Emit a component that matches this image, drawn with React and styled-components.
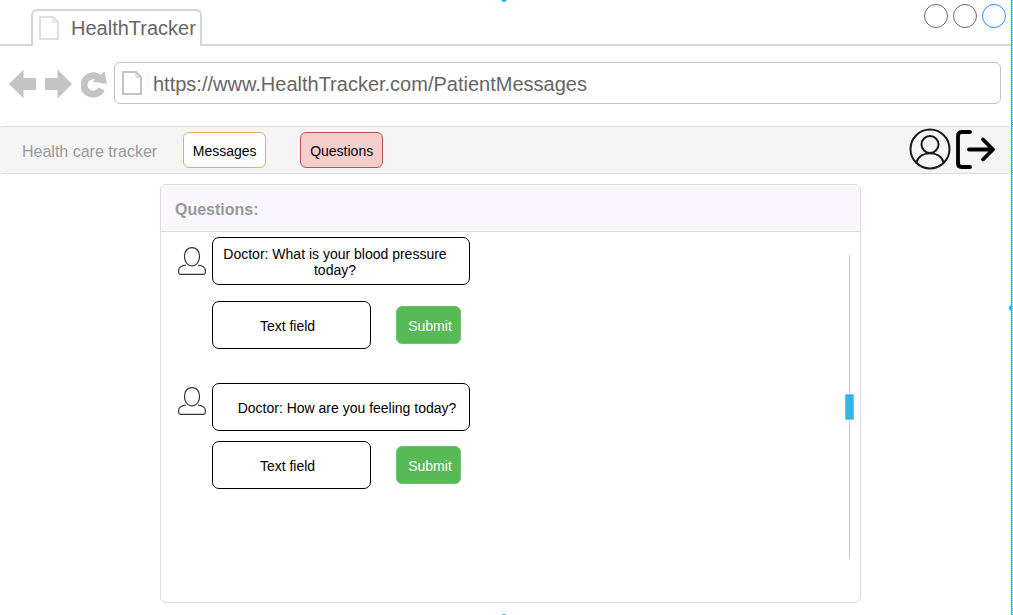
import React from "react";
import styled, { createGlobalStyle } from "styled-components";

const GlobalStyle = createGlobalStyle`
  *, *::before, *::after { box-sizing: border-box; }
  body {
    margin: 0;
    background: #fff;
    color: #000;
    font-family: "Liberation Sans", Arial, sans-serif;
    font-size: 14px;
    line-height: 16px;
  }
  button, input { font: inherit; color: inherit; margin: 0; }
`;

const BrowserWindow = styled.div`
  position: relative;
  display: flex;
  flex-direction: column;
  min-height: 100vh;
  border-right: 1px dotted #29b6f2;
  overflow: hidden;
`;

const Frame = styled.div`
  display: flex;
  flex-direction: column;
  flex: 1;
  border-right: 1px solid #8c8c8c;
`;

const Handle = styled.span`
  position: absolute;
  width: 6px;
  height: 6px;
  border-radius: 50%;
  background: #29b6f2;
  ${(p) => p.$side === "top" && "top: -4px; left: calc(50% - 5px);"}
  ${(p) => p.$side === "bottom" && "bottom: -5px; left: calc(50% - 5px);"}
  ${(p) => p.$side === "right" && "right: -3px; top: calc(50% - 3px);"}
`;

const TabStrip = styled.div`
  display: flex;
  justify-content: space-between;
  align-items: flex-start;
  height: 46px;
  padding: 9px 5px 0 31px;
  box-shadow: inset 0 -2px #d6d6d6;
`;

const Tab = styled.div`
  display: flex;
  align-items: center;
  gap: 12px;
  height: 37px;
  width: 171px;
  padding: 0 6px 2px;
  border: 2px solid #d6d6d6;
  border-bottom: 0;
  border-radius: 6px 6px 0 0;
  background: #fff;
  color: #666;
  font-size: 20px;
  line-height: 24px;
  & > svg { flex: none; }
`;

const WindowControls = styled.div`
  display: flex;
  gap: 5px;
  margin-top: -5px;
`;

const WindowButton = styled.button`
  width: 24px;
  height: 24px;
  padding: 0;
  border: 1px solid ${(p) => (p.$active ? "#1e90ff" : "#6a6a6a")};
  border-radius: 50%;
  background: #fff;
`;

const Toolbar = styled.div`
  display: flex;
  align-items: center;
  gap: 7px;
  height: 80px;
  padding: 0 10px 6px 9px;
`;

const HistoryButtons = styled.div`
  display: flex;
  align-items: center;
  gap: 9px;
  padding-top: 2px;
`;

const IconButton = styled.button`
  display: flex;
  padding: 0;
  border: 0;
  background: none;
  color: #c4c4c4;
`;

const AddressBar = styled.label`
  display: flex;
  align-items: center;
  gap: 11px;
  flex: 1;
  height: 42px;
  padding: 0 8px 0 7px;
  border: 1px solid #c4c4c4;
  border-radius: 6px;
  background: #fff;
`;

const AddressInput = styled.input`
  flex: 1;
  min-width: 0;
  height: 32px;
  padding: 2px 0 0;
  border: 0;
  outline: 0;
  background: none;
  color: #666;
  font-size: 20px;
`;

const NavBar = styled.nav`
  display: flex;
  align-items: center;
  height: 48px;
  padding: 0 15px 0 22px;
  border: 1px solid #ddd;
  border-width: 1px 0;
  border-radius: 3px;
  background: #f5f5f5;
`;

const Brand = styled.span`
  margin-right: 26px;
  padding-top: 4px;
  color: #999;
  font-size: 16px;
  line-height: 20px;
`;

const NavButton = styled.button`
  width: 83px;
  height: 36px;
  margin-right: 34px;
  padding: 2px 0 0;
  border: 1px solid ${(p) => (p.$active ? "#b85450" : "#d6b656")};
  border-radius: 6px;
  background: ${(p) => (p.$active ? "#f8cecc" : "#fff")};
`;

const NavActions = styled.div`
  display: flex;
  gap: 4px;
  margin-left: auto;
  padding-bottom: 2px;
`;

const Card = styled.main`
  display: flex;
  flex-direction: column;
  flex: 1;
  margin: 10px 150px 12px 160px;
  border: 1px solid #ddd;
  border-radius: 6px;
  background: #fff;
`;

const CardHeader = styled.h1`
  margin: 0;
  height: 47px;
  padding: 15px 14px;
  border-bottom: 1px solid #ddd;
  border-radius: 6px 6px 0 0;
  background: #faf8fe;
  color: #999;
  font-size: 16px;
  line-height: 20px;
`;

const CardBody = styled.div`
  display: flex;
  flex: 1;
  justify-content: space-between;
  padding: 5px 6px 0 17px;
`;

const QuestionList = styled.div`
  display: flex;
  flex-direction: column;
  gap: 34px;
`;

const QuestionForm = styled.form`
  display: flex;
  flex-direction: column;
  gap: ${(p) => (p.$compact ? 10 : 16)}px;
`;

const QuestionRow = styled.div`
  display: flex;
  align-items: ${(p) => (p.$compact ? "flex-start" : "center")};
  gap: 6px;
  & > svg { margin-top: ${(p) => (p.$compact ? 4 : 0)}px; }
`;

const Bubble = styled.label`
  display: flex;
  align-items: center;
  justify-content: center;
  width: 258px;
  height: 48px;
  padding: ${(p) => (p.$compact ? "2px 12px 0 24px" : "2px 22px 0 10px")};
  border: 1px solid #000;
  border-radius: 7px;
  text-align: center;
`;

const AnswerRow = styled.div`
  display: flex;
  align-items: center;
  gap: 25px;
  padding-left: 34px;
`;

const AnswerInput = styled.input`
  width: 159px;
  height: 48px;
  padding: 2px 16px 0 8px;
  border: 1px solid #000;
  border-radius: 7px;
  background: #fff;
  text-align: center;
`;

const SubmitButton = styled.button`
  width: 65px;
  height: 38px;
  padding: 2px 0 0 3px;
  border: 1px solid #6cc46a;
  border-radius: 6px;
  background: #58b957;
  color: #fff;
`;

const ScrollSlider = styled.input`
  appearance: none;
  writing-mode: vertical-lr;
  width: 9px;
  height: 304px;
  margin-top: 18px;
  background: linear-gradient(#ccc, #ccc) center / 1px 100% no-repeat;
  outline: 0;

  &::-webkit-slider-thumb {
    appearance: none;
    width: 9px;
    height: 26px;
    border: 1px solid #62cdee;
    border-radius: 1px;
    background: #33b5e5;
  }
`;

const PageIcon = ({ width, height, stroke, color }) => (
  <svg width={width} height={height} viewBox="0 0 20 24" preserveAspectRatio="none" fill="none" stroke={color}>
    <path d="M1 1h13l5 5v17H1z" strokeWidth={stroke} />
    <path d="M14 1v5h5" strokeWidth="1" />
  </svg>
);

const ArrowIcon = ({ forward }) => (
  <svg width="27" height="30" viewBox="0 0 27 30" fill="currentColor">
    <path d={forward ? "M27 15 12.500 .5v8.500H0v12h12.500v8.500z" : "M0 15 14.500 .5v8.500H27v12H14.500v8.500z"} />
  </svg>
);

const ReloadIcon = () => (
  <svg width="26" height="28" viewBox="0 0 26 28">
    <path d="M18 7.800A9.200 9.200 0 1 0 20.500 19" fill="none" stroke="currentColor" strokeWidth="7" />
    <path d="M23.500 1.500 26 14 11.500 11.500z" fill="currentColor" />
  </svg>
);

const AccountIcon = () => (
  <svg width="42" height="42" viewBox="0 0 42 42" fill="none" stroke="#1a1a1a" strokeWidth="2">
    <circle cx="21" cy="21" r="19.500" />
    <circle cx="21" cy="16.500" r="8.500" />
    <path d="M7.500 34.500c1.500-6 7-9.300 13.500-9.300s12 3.300 13.500 9.300" />
  </svg>
);

const LogoutIcon = () => (
  <svg width="41" height="42" viewBox="0 0 41 42" fill="none" stroke="#000" strokeWidth="3.800" strokeLinecap="round" strokeLinejoin="round">
    <path d="M15 4H6.500Q3 4 3 8v27q0 4 3.500 4H15" />
    <path d="M14 21.500h24M28 11.500l10 10-10 10" />
  </svg>
);

const PatientIcon = () => (
  <svg width="28" height="28" viewBox="0 0 28 28" fill="none" stroke="#333" strokeWidth="1.200">
    <path d="M14 .7C9.500.7 6.500 4 6.500 9c0 3.800 1.300 6.800 3.600 8.600C12 19.300 16 19.300 17.900 17.600c2.300-1.800 3.600-4.800 3.600-8.600 0-5-3-8.300-7.500-8.300z" />
    <path d="M8 18c-4 .7-7.300 1.500-7.300 5v2.500q0 1.800 1.800 1.800h23q1.800 0 1.800-1.800V23c0-3.500-3.300-4.300-7.300-5" />
  </svg>
);

const questions = [
  { id: "pressure", text: "Doctor: What is your blood pressure today?", compact: false },
  { id: "feeling", text: "Doctor: How are you feeling today?", compact: true },
];

function Question({ id, text, compact }) {
  return (
    <QuestionForm $compact={compact} onSubmit={(e) => e.preventDefault()}>
      <QuestionRow $compact={compact}>
        <PatientIcon />
        <Bubble htmlFor={id} $compact={compact}>{text}</Bubble>
      </QuestionRow>
      <AnswerRow>
        <AnswerInput id={id} type="text" defaultValue="Text field" />
        <SubmitButton type="submit">Submit</SubmitButton>
      </AnswerRow>
    </QuestionForm>
  );
}

export default function App() {
  return (
    <>
      <GlobalStyle />
      <BrowserWindow>
        <Frame>
          <TabStrip>
            <Tab>
              <PageIcon width={20} height={24} stroke={1.5} color="#d6d6d6" />
              HealthTracker
            </Tab>
            <WindowControls>
              <WindowButton aria-label="Minimize" />
              <WindowButton aria-label="Maximize" />
              <WindowButton aria-label="Close" $active />
            </WindowControls>
          </TabStrip>
          <Toolbar>
            <HistoryButtons>
              <IconButton aria-label="Back"><ArrowIcon /></IconButton>
              <IconButton aria-label="Forward"><ArrowIcon forward /></IconButton>
              <IconButton aria-label="Reload"><ReloadIcon /></IconButton>
            </HistoryButtons>
            <AddressBar>
              <PageIcon width={20} height={24} stroke={2} color="#c4c4c4" />
              <AddressInput aria-label="Address" defaultValue="https://www.HealthTracker.com/PatientMessages" />
            </AddressBar>
          </Toolbar>
          <NavBar>
            <Brand>Health care tracker</Brand>
            <NavButton>Messages</NavButton>
            <NavButton $active>Questions</NavButton>
            <NavActions>
              <IconButton aria-label="Account"><AccountIcon /></IconButton>
              <IconButton aria-label="Log out"><LogoutIcon /></IconButton>
            </NavActions>
          </NavBar>
          <Card>
            <CardHeader>Questions:</CardHeader>
            <CardBody>
              <QuestionList>
                {questions.map((q) => <Question key={q.id} {...q} />)}
              </QuestionList>
              <ScrollSlider type="range" aria-label="Scroll position" defaultValue={50} />
            </CardBody>
          </Card>
        </Frame>
        <Handle $side="top" />
        <Handle $side="right" />
        <Handle $side="bottom" />
      </BrowserWindow>
    </>
  );
}
